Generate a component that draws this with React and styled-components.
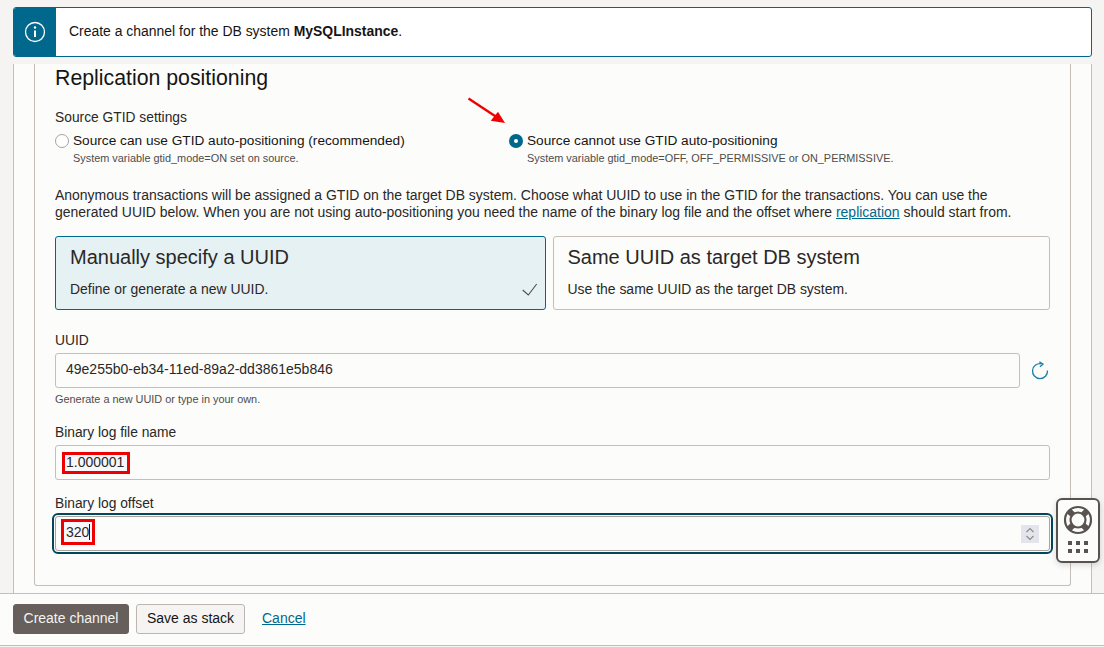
import React from "react";
import styled, { createGlobalStyle } from "styled-components";

const GlobalStyle = createGlobalStyle`
  html, body {
    margin: 0;
    padding: 0;
    background: #f5f4f2;
    font-family: "Liberation Sans", Arial, sans-serif;
    color: #161513;
  }
`;

const Page = styled.div`
  position: relative;
  width: 1104px;
  height: 647px;
  display: flex;
  flex-direction: column;
  overflow: hidden;
`;

const Banner = styled.div`
  display: flex;
  height: 50px;
  margin: 7px 12px 7px 13px;
  box-sizing: border-box;
  border: 1px solid #00688c;
  border-radius: 3px;
  background: #fff;
  overflow: hidden;
  flex-shrink: 0;
`;

const BannerIcon = styled.div`
  width: 42px;
  background: #00688c;
  display: flex;
  align-items: center;
  justify-content: center;
`;

const BannerText = styled.div`
  display: flex;
  align-items: center;
  padding: 0 0 2px 13px;
  font-size: 13.95px;
  white-space: pre;
`;

const Panel = styled.div`
  flex: 1;
  min-height: 0;
  width: 1079px;
  margin-left: 13px;
  box-sizing: border-box;
  padding: 0 20px;
  background: #fcfcfb;
  border-left: 1px solid #c4bfb9;
  border-right: 1px solid #c4bfb9;
`;

const Card = styled.div`
  height: 522px;
  box-sizing: border-box;
  padding: 2px 20px 0;
  border: 1px solid #c4bfb9;
  border-top: none;
  border-radius: 0 0 3px 3px;
`;

const Heading = styled.h2`
  margin: 0 0 20px;
  font-size: 21.3px;
  font-weight: 400;
  line-height: 24px;
`;

const Label = styled.div`
  font-size: 13.8px;
  line-height: 16px;
  color: #2a2826;
`;

const RadioGrid = styled.div`
  display: grid;
  grid-template-columns: 454px 1fr;
  margin-top: 6px;
`;

const RadioOption = styled.div`
  display: grid;
  grid-template-columns: 18px 1fr;
  align-items: center;
`;

const RadioDot = styled.span`
  width: 14px;
  height: 14px;
  box-sizing: border-box;
  border-radius: 50%;
  background: ${(p) => (p.$checked ? "#00688c" : "#fff")};
  border: ${(p) => (p.$checked ? "none" : "1px solid #a8a39d")};
  display: flex;
  align-items: center;
  justify-content: center;

  &::after {
    content: "";
    display: ${(p) => (p.$checked ? "block" : "none")};
    width: 4px;
    height: 4px;
    border-radius: 50%;
    background: #fff;
  }
`;

const RadioText = styled.span`
  font-size: 13.67px;
  line-height: 18px;
`;

const RadioHelp = styled.span`
  grid-column: 2;
  margin-top: 1px;
  font-size: 10.9px;
  line-height: 14px;
  color: #4f4c49;
`;

const Paragraph = styled.p`
  margin: 22px 0 15px;
  font-size: 13.98px;
  line-height: 17px;
  color: #2a2826;
`;

const DocLink = styled.a`
  color: #00688c;
  text-decoration: underline;
`;

const TileRow = styled.div`
  display: grid;
  grid-template-columns: 491px 497px;
  gap: 7px;
  margin-bottom: 23px;
`;

const Tile = styled.div`
  position: relative;
  height: 74px;
  box-sizing: border-box;
  padding: 8px ${(p) => (p.$selected ? 14 : 13.5)}px;
  border: 1px solid ${(p) => (p.$selected ? "#00688c" : "#c4bfb9")};
  border-radius: 3px;
  background: ${(p) => (p.$selected ? "#e6f1f4" : "#fcfcfb")};
`;

const TileTitle = styled.div`
  font-size: 20px;
  line-height: 24px;
  color: #2a2826;
`;

const TileText = styled.div`
  margin-top: 11px;
  font-size: 13.95px;
  line-height: 18px;
  color: #2a2826;
`;

const TileCheck = styled.svg`
  position: absolute;
  right: 7px;
  bottom: 10px;
`;

const Field = styled.div`
  margin-bottom: ${(p) => p.$gap || 16}px;
`;

const FieldLabel = styled(Label)`
  margin-bottom: 4px;
`;

const InputRow = styled.div`
  display: flex;
  align-items: center;
  gap: 11px;
`;

const InputBox = styled.div`
  position: relative;
  flex: 1;
  height: 35px;
  box-sizing: border-box;
  display: flex;
  align-items: center;
  padding: 0 0 ${(p) => (p.$boxed ? 0 : 3)}px ${(p) => (p.$boxed ? 6 : 10)}px;
  font-size: 14px;
  color: #2a2826;
  background: #fcfcfb;
  border: 1px solid #c4bfb9;
  border-radius: 3px;
  ${(p) => p.$focused && "outline: 2px solid #04465e; outline-offset: 1px; border-color: #a8a39d;"}
`;

const Marked = styled.span`
  display: inline-flex;
  align-items: center;
  box-sizing: border-box;
  height: ${(p) => (p.$caret ? 26 : 22)}px;
  margin: ${(p) => (p.$caret ? "-3px 0 0 -1px" : "0")};
  padding: 0 ${(p) => (p.$caret ? 2 : 3)}px ${(p) => (p.$caret ? 0 : 1)}px ${(p) => (p.$caret ? 2 : 1)}px;
  border: 3px solid #ee0000;
  background: #f7f6fb;
`;

const Caret = styled.span`
  display: inline-block;
  width: 1px;
  height: 16px;
  background: #161513;
`;

const Spinner = styled.div`
  position: absolute;
  right: 10px;
  top: 8px;
  width: 18px;
  height: 18px;
  background: #e4e4ec;
`;

const RefreshIcon = styled.svg`
  flex-shrink: 0;
  margin-right: 1px;
  overflow: visible;
`;

const FieldHelp = styled.div`
  margin-top: 4px;
  font-size: 10.9px;
  line-height: 14px;
  color: #4f4c49;
`;

const Footer = styled.div`
  flex-shrink: 0;
  height: 53px;
  box-sizing: border-box;
  display: flex;
  align-items: center;
  gap: 7px;
  padding: 0 13px 2px;
  background: #fcfcfb;
  border-top: 1px solid #c4bfb9;
  border-bottom: 1px solid #c4bfb9;
  margin-bottom: 1px;
`;

const Button = styled.button`
  width: ${(p) => p.$width}px;
  height: 30px;
  padding: 0 0 2px;
  font-family: inherit;
  font-size: 14px;
  border-radius: 3px;
  color: ${(p) => (p.$primary ? "#f5f4f2" : "#161513")};
  background: ${(p) => (p.$primary ? "#665f5b" : "#f5f4f2")};
  border: 1px solid ${(p) => (p.$primary ? "#665f5b" : "#bcb6b1")};
`;

const CancelLink = styled.a`
  margin: 0 0 2px 10px;
  font-size: 14px;
  color: #00688c;
  text-decoration: underline;
`;

const Annotation = styled.svg`
  position: absolute;
  left: 466px;
  top: 96px;
`;

const HelpWidget = styled.div`
  position: absolute;
  left: 1056px;
  top: 498px;
  width: 44px;
  height: 65px;
  box-sizing: border-box;
  display: flex;
  flex-direction: column;
  align-items: center;
  padding-top: 5px;
  gap: 6px;
  background: #fcfcfb;
  border: 2px solid #59534f;
  border-radius: 6px;
  box-shadow: 0 2px 6px rgba(0, 0, 0, 0.15);
`;

const GridDots = styled.div`
  display: grid;
  grid-template-columns: repeat(3, 4px);
  gap: 4px;
`;

const GridDot = styled.span`
  width: 4px;
  height: 4px;
  background: #59534f;
`;

export default function App() {
  return (
    <Page>
      <GlobalStyle />
      <Banner>
        <BannerIcon>
          <svg width="22" height="22" viewBox="0 0 22 22" fill="none" stroke="#fff">
            <circle cx="11" cy="11" r="9.5" strokeWidth="1.3" />
            <path d="M11 9.5V16" strokeWidth="2" />
            <circle cx="11" cy="6.5" r="1.2" fill="#fff" stroke="none" />
          </svg>
        </BannerIcon>
        <BannerText>
          Create a channel for the DB system <b>MySQLInstance</b>.
        </BannerText>
      </Banner>

      <Panel>
        <Card>
          <Heading>Replication positioning</Heading>
          <Label>Source GTID settings</Label>
          <RadioGrid>
            <RadioOption>
              <RadioDot />
              <RadioText>Source can use GTID auto-positioning (recommended)</RadioText>
              <RadioHelp>System variable gtid_mode=ON set on source.</RadioHelp>
            </RadioOption>
            <RadioOption>
              <RadioDot $checked />
              <RadioText>Source cannot use GTID auto-positioning</RadioText>
              <RadioHelp>System variable gtid_mode=OFF, OFF_PERMISSIVE or ON_PERMISSIVE.</RadioHelp>
            </RadioOption>
          </RadioGrid>

          <Paragraph>
            Anonymous transactions will be assigned a GTID on the target DB system. Choose what UUID to use in the GTID for the transactions. You can use the generated UUID below. When you are not using auto-positioning you need the name of the binary log file and the offset where <DocLink href="#">replication</DocLink> should start from.
          </Paragraph>

          <TileRow>
            <Tile $selected>
              <TileTitle>Manually specify a UUID</TileTitle>
              <TileText>Define or generate a new UUID.</TileText>
              <TileCheck width="16" height="16" viewBox="0 0 16 16" fill="none" stroke="#4f4c49" strokeWidth="1.1">
                <path d="M0.7 7L6.3 12L14.7 1" />
              </TileCheck>
            </Tile>
            <Tile>
              <TileTitle>Same UUID as target DB system</TileTitle>
              <TileText>Use the same UUID as the target DB system.</TileText>
            </Tile>
          </TileRow>

          <Field $gap={19}>
            <FieldLabel>UUID</FieldLabel>
            <InputRow>
              <InputBox>49e255b0-eb34-11ed-89a2-dd3861e5b846</InputBox>
              <RefreshIcon width="18" height="18" viewBox="0 0 18 18" fill="none" stroke="#1d7fa3" strokeWidth="1.3">
                <path d="M16.5 8.5A7.5 7.5 0 1 1 10.5 1.7" />
                <path d="M8.3 -0.3L12 2L9 4.7" />
              </RefreshIcon>
            </InputRow>
            <FieldHelp>Generate a new UUID or type in your own.</FieldHelp>
          </Field>

          <Field>
            <FieldLabel>Binary log file name</FieldLabel>
            <InputBox $boxed>
              <Marked>1.000001</Marked>
            </InputBox>
          </Field>

          <Field>
            <FieldLabel>Binary log offset</FieldLabel>
            <InputBox $boxed $focused>
              <Marked $caret>
                320
                <Caret />
              </Marked>
              <Spinner>
                <svg width="18" height="18" viewBox="0 0 18 18" fill="none" stroke="#8f8b88" strokeWidth="1.2">
                  <path d="M5.5 7L9 3.5L12.5 7" />
                  <path d="M5.5 11L9 14.5L12.5 11" />
                </svg>
              </Spinner>
            </InputBox>
          </Field>
        </Card>
      </Panel>

      <Footer>
        <Button $primary $width={116}>Create channel</Button>
        <Button $width={109}>Save as stack</Button>
        <CancelLink href="#">Cancel</CancelLink>
      </Footer>

      <Annotation width="44" height="34" viewBox="0 0 44 34">
        <path d="M2.5 2.5L32 22" stroke="#f00000" strokeWidth="2.4" />
        <path d="M39 27L24.7 24.7L32 15.7Z" fill="#f00000" />
      </Annotation>

      <HelpWidget>
        <svg width="30" height="30" viewBox="0 0 30 30" fill="none" stroke="#59534f">
          <circle cx="15" cy="15" r="13" strokeWidth="2.2" />
          <circle cx="15" cy="15" r="7.5" strokeWidth="2.2" />
          <g strokeWidth="6">
            <path d="M9.7 9.7L5.8 5.8" />
            <path d="M20.3 9.7L24.2 5.8" />
            <path d="M9.7 20.3L5.8 24.2" />
            <path d="M20.3 20.3L24.2 24.2" />
          </g>
        </svg>
        <GridDots>
          {Array.from({ length: 6 }).map((_, i) => (
            <GridDot key={i} />
          ))}
        </GridDots>
      </HelpWidget>
    </Page>
  );
}
